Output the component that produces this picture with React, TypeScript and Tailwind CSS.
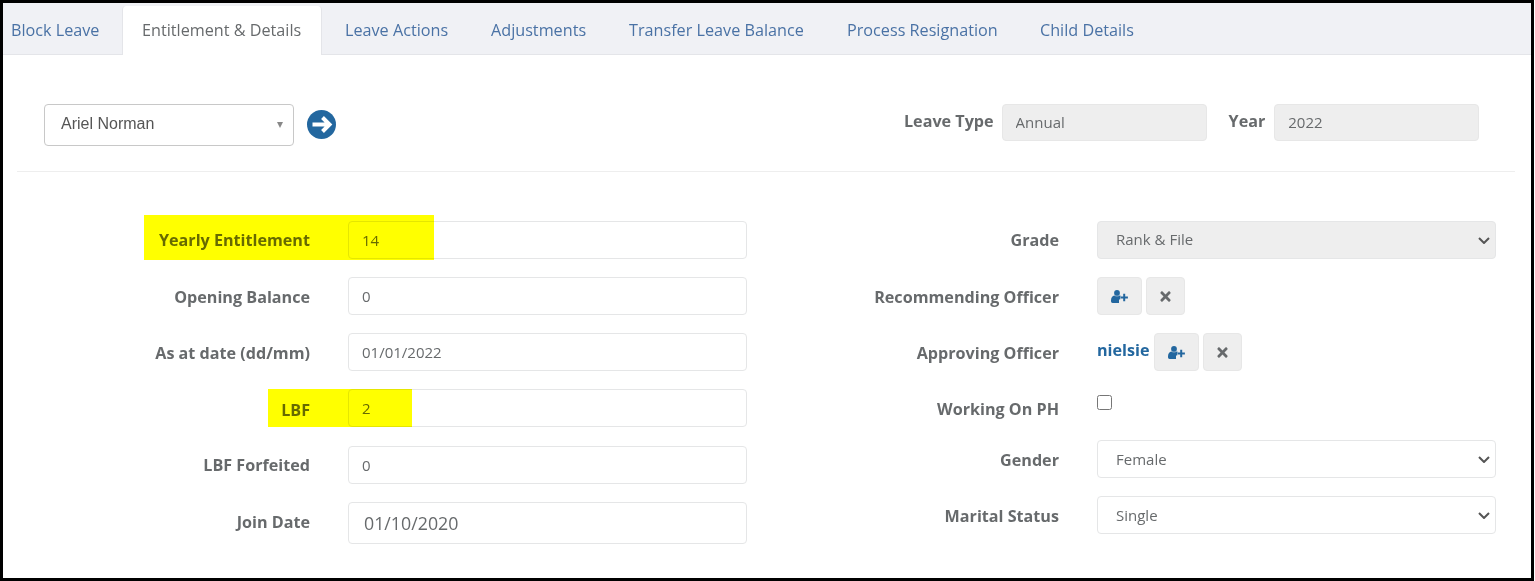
import { FaTimes } from "react-icons/fa";

const tabs = [
    { label: "Block Leave", width: "w-[119px] pl-[8px]" },
    { label: "Entitlement & Details", width: "w-[200px] pl-[19px]", active: true },
    { label: "Leave Actions", width: "w-[146px] pl-[23px]" },
    { label: "Adjustments", width: "w-[138px] pl-[23px]" },
    { label: "Transfer Leave Balance", width: "w-[218px] pl-[23px]" },
    { label: "Process Resignation", width: "w-[193px] pl-[23px]" },
    { label: "Child Details", width: "w-[140px] pl-[23px]" },
];

const inputClass =
    "block w-full rounded-[4px] border border-[#e5e6e7] bg-white pb-[1px] pl-[13px] pr-3 text-[15px] text-[#676a6c] outline-none";

function Label({ children, className = "" }: { children: React.ReactNode; className?: string }) {
    return (
        <label className={`w-full text-right text-[16.15px] font-bold text-[#676a6c] ${className}`}>
            {children}
        </label>
    );
}

function FieldRow({
    label,
    value,
    tall,
    rowClass,
    labelClass,
}: {
    label: string;
    value: string;
    tall?: boolean;
    rowClass: string;
    labelClass?: string;
}) {
    return (
        <div className={`grid grid-cols-[293px_399px] items-center gap-x-[38px] ${rowClass}`}>
            <Label className={labelClass}>{label}</Label>
            <input
                readOnly
                value={value}
                className={
                    tall
                        ? `${inputClass} h-[42px] pl-[15px] !text-[17.8px]`
                        : `${inputClass} h-[38px]`
                }
            />
        </div>
    );
}

function UserPlusIcon() {
    return (
        <svg viewBox="0 0 17 13" className="h-[13px] w-[17px]" fill="currentColor">
            <circle cx="6" cy="2.9" r="2.9" />
            <path d="M0 10.5C0 7.5 1.5 5.6 3.4 5.4 4.2 6 5 6.3 6 6.3s1.8-.3 2.6-.9c.7.1 1.3.4 1.8.9H9.2v3.2H8V13H1.6C.6 13 0 12.2 0 11z" />
            <path d="M13.2 3.8v7.4M9.5 7.5h7.4" stroke="currentColor" strokeWidth="2" />
        </svg>
    );
}

function IconButton({ kind }: { kind: "add" | "clear" }) {
    return (
        <button
            type="button"
            className={`flex h-[38px] items-center justify-center rounded-[4px] border border-[#e7e7e7] bg-[#eeeeee] ${
                kind === "add" ? "w-[45px] text-[#23679f]" : "w-[39px] text-[#676a6c]"
            }`}
        >
            {kind === "add" ? <UserPlusIcon /> : <FaTimes size={15} />}
        </button>
    );
}

function SelectRow({
    label,
    value,
    disabled,
    rowClass,
    labelClass,
}: {
    label: string;
    value: string;
    disabled?: boolean;
    rowClass: string;
    labelClass?: string;
}) {
    return (
        <div className={`grid grid-cols-[293px_399px] items-center gap-x-[38px] ${rowClass}`}>
            <Label className={labelClass}>{label}</Label>
            <div className="relative">
                <select
                    defaultValue={value}
                    className={`block h-[38px] w-full appearance-none rounded-[4px] border border-[#e5e6e7] pl-[18px] text-[15px] text-[#676a6c] ${
                        disabled ? "bg-[#eeeeee] pb-[1px]" : "bg-white"
                    }`}
                >
                    <option>{value}</option>
                </select>
                <svg
                    viewBox="0 0 12 7"
                    className="pointer-events-none absolute right-[6px] top-[16px] h-[7px] w-[12px]"
                    fill="none"
                    stroke="#555555"
                    strokeWidth="2"
                >
                    <path d="M1 1l5 5 5-5" />
                </svg>
            </div>
        </div>
    );
}

export default function App() {
    return (
        <div className="relative h-[581px] w-[1534px] overflow-hidden border-[3px] border-black bg-white font-['Open_Sans',sans-serif]">
            <div className="flex h-[52px] items-end border-b border-[#e4e5e9] bg-[#f0f1f5]">
                {tabs.map((tab) => (
                    <div
                        key={tab.label}
                        className={`flex h-[48px] items-center text-[16.2px] ${tab.width} ${
                            tab.active
                                ? "-mb-px h-[49px] rounded-t-[4px] border-x border-[#e4e5e9] bg-white text-[#676a6c]"
                                : "text-[#4a72a5]"
                        }`}
                    >
                        <span className="whitespace-nowrap">{tab.label}</span>
                    </div>
                ))}
            </div>

            <div className="ml-[14px] mr-[16px] flex h-[117px] items-start border-b border-[#eeeeee] pt-[49px]">
                <div className="ml-[27px] flex h-[42px] w-[250px] items-center justify-between rounded-[4px] border border-[#c8c8c8] bg-white pb-[2px] pl-[16px] pr-[10px] font-['Liberation_Sans',sans-serif] text-[16px] text-[#555555]">
                    <span>Ariel Norman</span>
                    <span className="mt-[2px] h-0 w-0 border-x-[3.5px] border-t-[6px] border-x-transparent border-t-[#888888]" />
                </div>
                <svg viewBox="0 0 29 29" className="ml-[13px] mt-[6px] h-[29px] w-[29px]">
                    <circle cx="14.5" cy="14.5" r="14.5" fill="#23679f" />
                    <path d="M5.5 14.5H22M15.5 7.5l7 7-7 7" fill="none" stroke="#ffffff" strokeWidth="4" />
                </svg>
                <label className="ml-[568px] mt-[5px] text-[16.15px] font-bold text-[#676a6c]">Leave Type</label>
                <input
                    readOnly
                    value="Annual"
                    className={`${inputClass} ml-[8px] h-[37px] !w-[205px] !border-[#e7e7e7] !bg-[#eeeeee] !pb-[2px]`}
                />
                <label className="ml-[22px] mt-[5px] text-[16.15px] font-bold text-[#676a6c]">Year</label>
                <input
                    readOnly
                    value="2022"
                    className={`${inputClass} ml-[9px] h-[37px] !w-[205px] !border-[#e7e7e7] !bg-[#eeeeee] !pb-[2px]`}
                />
            </div>

            <div className="flex pl-[14px] pt-[49px]">
                <div className="w-[730px] shrink-0">
                    <FieldRow label="Yearly Entitlement" value="14" rowClass="" />
                    <FieldRow label="Opening Balance" value="0" rowClass="mt-[18px]" labelClass="pt-[2px]" />
                    <FieldRow label="As at date (dd/mm)" value="01/01/2022" rowClass="mt-[18px]" labelClass="pt-[2px]" />
                    <FieldRow label="LBF" value="2" rowClass="mt-[18px]" labelClass="pt-[4px]" />
                    <FieldRow label="LBF Forfeited" value="0" rowClass="mt-[19px]" />
                    <FieldRow label="Join Date" value="01/10/2020" tall rowClass="mt-[18px]" labelClass="pb-[2px]" />
                </div>
                <div className="ml-[19px] w-[730px] shrink-0">
                    <SelectRow label="Grade" value="Rank & File" disabled rowClass="" />
                    <div className="mt-[18px] grid grid-cols-[293px_399px] items-center gap-x-[38px]">
                        <Label className="pt-[2px]">Recommending Officer</Label>
                        <div className="flex gap-[4px]">
                            <IconButton kind="add" />
                            <IconButton kind="clear" />
                        </div>
                    </div>
                    <div className="mt-[18px] grid grid-cols-[293px_399px] items-center gap-x-[38px]">
                        <Label className="pt-[2px]">Approving Officer</Label>
                        <div className="flex items-center gap-[4px]">
                            <span className="-mt-[3px] mr-[1px] text-[16.15px] font-bold text-[#23679f]">nielsie</span>
                            <IconButton kind="add" />
                            <IconButton kind="clear" />
                        </div>
                    </div>
                    <div className="mt-[18px] grid h-[33px] grid-cols-[293px_399px] items-center gap-x-[38px]">
                        <Label className="pt-[8px]">Working On PH</Label>
                        <input type="checkbox" className="-mt-[6px] h-[15px] w-[15px] appearance-auto" />
                    </div>
                    <SelectRow label="Gender" value="Female" rowClass="mt-[18px]" labelClass="pt-[2px]" />
                    <SelectRow label="Marital Status" value="Single" rowClass="mt-[18px]" labelClass="pt-[2px]" />
                </div>
            </div>

            {/* marker highlights over the two fields */}
            <div className="absolute left-[141px] top-[212px] h-[45px] w-[290px] bg-[#ffff00] mix-blend-multiply" />
            <div className="absolute left-[265px] top-[386px] h-[38px] w-[144px] bg-[#ffff00] mix-blend-multiply" />
        </div>
    );
}
